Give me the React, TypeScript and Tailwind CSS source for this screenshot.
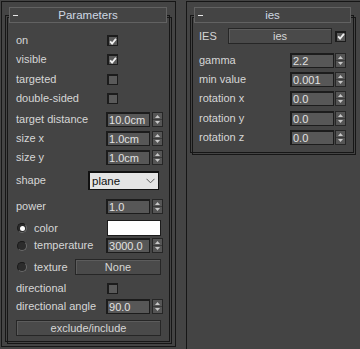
const font = { fontFamily: '"Liberation Sans", Arial, sans-serif' };

function Check({ on }: { on?: boolean }) {
  return (
    <div className="w-[11px] h-[11px] shrink-0 bg-[#5a5a5a] border-t-2 border-l-2 border-r border-b border-[#1c1c1c] flex items-center justify-center">
      {on && (
        <svg width="9" height="9" viewBox="0 0 9 9">
          <path d="M1.3 4.3 L3.5 6.8 L7.8 1.6" stroke="#f0f0f0" strokeWidth="2" fill="none" />
        </svg>
      )}
    </div>
  );
}

function Spin() {
  return (
    <div className="w-[11px] h-[15px] shrink-0 bg-[#555555] border border-[#262626]">
      <svg width="9" height="13" viewBox="0 0 9 13" className="block">
        <path d="M4.5 2 L7 5 L2 5 Z" fill="#c8c8c8" />
        <line x1="0" y1="6.5" x2="9" y2="6.5" stroke="#3a3a3a" strokeWidth="1" />
        <path d="M4.5 11 L7 8 L2 8 Z" fill="#c8c8c8" />
      </svg>
    </div>
  );
}

function Num({ v }: { v: string }) {
  return (
    <div className="w-[44px] h-[15px] shrink-0 bg-[#575757] border-t-2 border-l-2 border-r border-b border-[#1c1c1c] text-[#e2e2e2] text-[11px] leading-[12px] pl-[1px] overflow-hidden whitespace-nowrap">
      {v}
    </div>
  );
}

function Radio({ on }: { on?: boolean }) {
  return (
    <div className="w-[10px] h-[10px] shrink-0 rounded-full bg-[#2c2c2c] border-t border-l border-[#1a1a1a] border-r border-b border-r-[#6a6a6a] border-b-[#6a6a6a] flex items-center justify-center">
      {on && <div className="w-[5px] h-[5px] rounded-full bg-white" />}
    </div>
  );
}

function Btn({ label, w }: { label: string; w: string }) {
  return (
    <div
      className={`${w} h-[16px] shrink-0 bg-[#4a4a4a] border border-[#262626] shadow-[inset_1px_1px_0_#5c5c5c] flex items-center justify-center text-[#d6d6d6] text-[11px]`}
    >
      {label}
    </div>
  );
}

function Header({ title, w }: { title: string; w: string }) {
  return (
    <div
      className={`relative z-10 ml-[7px] mt-[5px] ${w} h-[16px] bg-[#444444] border border-[#626262] flex items-center`}
    >
      <div className="absolute left-[3px] top-[7px] w-[5px] h-[1px] bg-[#e8e8e8]" />
      <div className="flex-1 text-center text-[11.5px] leading-[14px] text-[#cfd8e3]">{title}</div>
    </div>
  );
}

function NumRow({ label, v, cls }: { label: string; v: string; cls: string }) {
  return (
    <div className={`flex items-center h-[15px] ${cls}`}>
      <div className="w-[91px] whitespace-nowrap">{label}</div>
      <Num v={v} />
      <div className="w-[2px]" />
      <Spin />
    </div>
  );
}

function CheckRow({ label, on, cls }: { label: string; on?: boolean; cls: string }) {
  return (
    <div className={`flex items-center h-[11px] ${cls}`}>
      <div className="w-[91px] whitespace-nowrap">{label}</div>
      <Check on={on} />
    </div>
  );
}

function IesRow({ label, v, cls }: { label: string; v: string; cls: string }) {
  return (
    <div className={`flex items-center h-[15px] ${cls}`}>
      <div className="flex-1 whitespace-nowrap">{label}</div>
      <Num v={v} />
      <div className="w-[1px]" />
      <Spin />
    </div>
  );
}

export default function App() {
  return (
    <div
      className="w-[360px] h-[349px] bg-[#444444] flex pl-px pt-px gap-[10px] overflow-hidden text-[11px] text-[#d6d6d6]"
      style={font}
    >
      {/* Parameters rollout */}
      <div className="w-[175px] h-[346px] border border-[#161616] shrink-0">
        <Header title="Parameters" w="w-[158px]" />
        <div className="-mt-[8px] ml-[3px] w-[165px] border border-[#161616]">
          <div className="ml-px mt-px -mr-[3px] -mb-[3px] h-[327px] border border-[#161616] pl-[8px] pr-[8px] pt-[17px] leading-[13px]">
            <CheckRow label="on" on cls="" />
            <CheckRow label="visible" on cls="mt-[8px]" />
            <CheckRow label="targeted" cls="mt-[9px]" />
            <CheckRow label="double-sided" cls="mt-[8px]" />
            <NumRow label="target distance" v="10.0cm" cls="mt-[8px]" />
            <NumRow label="size x" v="1.0cm" cls="mt-[4px]" />
            <NumRow label="size y" v="1.0cm" cls="mt-[4px]" />

            <div className="flex items-center h-[19px] mt-[6px]">
              <div className="w-[72px]">shape</div>
              <div className="w-[71px] h-[19px] bg-[#e4e4e4] border-t-2 border-l-2 border-r border-b border-[#111111] flex items-center pl-[2px] pr-[3px] text-[#111111] text-[11.5px]">
                <span className="flex-1">plane</span>
                <svg width="9" height="6" viewBox="0 0 9 6">
                  <path d="M0.5 0.8 L4.5 4.8 L8.5 0.8" stroke="#5a5a5a" strokeWidth="1" fill="none" />
                </svg>
              </div>
            </div>

            <NumRow label="power" v="1.0" cls="mt-[9px]" />

            <div className="flex items-center h-[16px] mt-[6px]">
              <div className="w-[91px] flex items-center gap-[7px] pl-[1px]">
                <Radio on />
                <span>color</span>
              </div>
              <div className="w-[54px] h-[16px] bg-white border border-[#1c1c1c]" />
            </div>

            <div className="flex items-center h-[15px] mt-[2px]">
              <div className="w-[91px] flex items-center gap-[7px] pl-[1px]">
                <Radio />
                <span>temperature</span>
              </div>
              <Num v="3000.0" />
              <div className="w-[2px]" />
              <Spin />
            </div>

            <div className="flex items-center h-[16px] mt-[6px]">
              <div className="w-[59px] flex items-center gap-[7px] pl-[1px]">
                <Radio />
                <span>texture</span>
              </div>
              <Btn label="None" w="w-[86px]" />
            </div>

            <CheckRow label="directional" cls="mt-[8px]" />
            <NumRow label="directional angle" v="90.0" cls="mt-[5px]" />

            <div className="mt-[6px]">
              <Btn label="exclude/include" w="w-[145px]" />
            </div>
          </div>
        </div>
      </div>

      {/* ies rollout */}
      <div className="w-[174px] h-[360px] border-l border-t border-[#161616] shrink-0">
        <Header title="ies" w="w-[157px]" />
        <div className="-mt-[8px] ml-[3px] w-[164px] border border-[#161616]">
          <div className="ml-px mt-px -mr-[3px] -mb-[3px] h-[138px] border border-[#161616] pl-[6px] pr-[9px] pt-[10px] leading-[13px]">
            <div className="flex items-center h-[16px]">
              <div className="w-[29px]">IES</div>
              <Btn label="ies" w="w-[104px]" />
              <div className="w-[3px]" />
              <Check on />
            </div>
            <IesRow label="gamma" v="2.2" cls="mt-[9px]" />
            <IesRow label="min value" v="0.001" cls="mt-[4px]" />
            <IesRow label="rotation x" v="0.0" cls="mt-[4px]" />
            <IesRow label="rotation y" v="0.0" cls="mt-[5px]" />
            <IesRow label="rotation z" v="0.0" cls="mt-[4px]" />
          </div>
        </div>
      </div>
    </div>
  );
}
